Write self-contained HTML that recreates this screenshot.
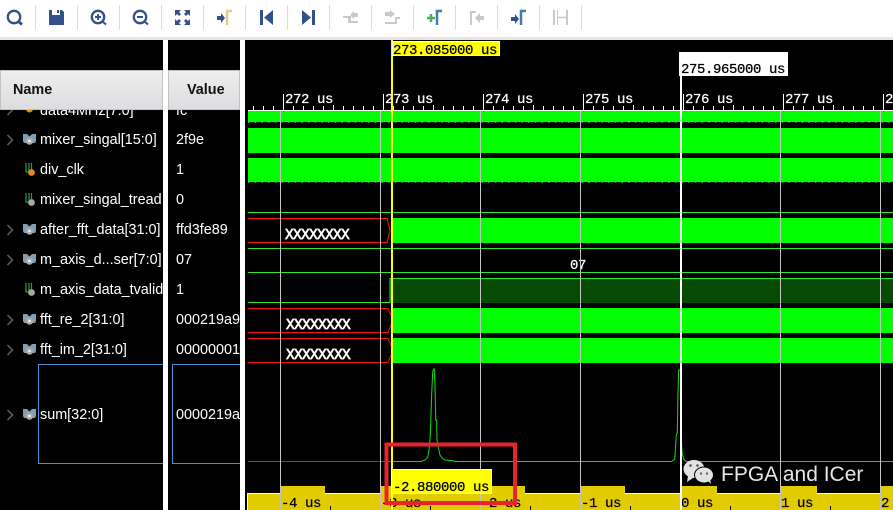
<!DOCTYPE html>
<html><head><meta charset="utf-8"><style>
html,body{margin:0;padding:0;background:#000;width:893px;height:510px;overflow:hidden}
svg{display:block}
.s{font-family:"Liberation Sans",Arial,sans-serif;font-size:14.4px;fill:#fff}
.h{font-family:"Liberation Sans",Arial,sans-serif;font-size:14.4px;font-weight:bold;fill:#111}
.m{font-family:"Liberation Mono",monospace;font-size:14px;letter-spacing:-.4px;fill:#fff;stroke:#fff;stroke-width:.25}
.k{font-family:"Liberation Mono",monospace;font-size:14px;letter-spacing:-.4px;fill:#000;stroke:#000;stroke-width:.25}
.x{font-family:"Liberation Mono",monospace;font-size:14.5px;letter-spacing:-.7px;fill:#fff;stroke:#fff;stroke-width:.7}
.c{fill:none;stroke:#606060;stroke-width:1.5}
</style></head><body>
<svg width="893" height="510" viewBox="0 0 893 510" xmlns="http://www.w3.org/2000/svg">
<defs>
<linearGradient id="hd" x1="0" y1="0" x2="0" y2="1"><stop offset="0" stop-color="#eeeeee"/><stop offset="1" stop-color="#dddde0"/></linearGradient>
<g id="bus"><path d="M0 0h4l2.500 2.500 2.500-2.500h4v7l-1 2h-11l-1-2z" fill="#7f9fb8"/><circle cx="6.500" cy="7" r="3.800" fill="#a8a8a8"/><circle cx="6.500" cy="7" r="1.400" fill="#eee"/></g>
<g id="bit"><path d="M.5 0v9h3v-9M6 0v6" fill="none" stroke="#2f9a46" stroke-width="1.200"/></g>
</defs>
<rect width="893" height="510" fill="#000"/>
<!-- toolbar -->
<rect width="893" height="37" fill="#fff"/><rect y="37" width="893" height="3" fill="#e6e6e6"/>
<g fill="#dcdcdc"><rect x="35" y="5" width="1" height="25"/><rect x="77" y="5" width="1" height="25"/><rect x="119" y="5" width="1" height="25"/><rect x="161" y="5" width="1" height="25"/><rect x="203" y="5" width="1" height="25"/><rect x="245" y="5" width="1" height="25"/><rect x="287" y="5" width="1" height="25"/><rect x="329" y="5" width="1" height="25"/><rect x="371" y="5" width="1" height="25"/><rect x="413" y="5" width="1" height="25"/><rect x="455" y="5" width="1" height="25"/><rect x="497" y="5" width="1" height="25"/><rect x="539" y="5" width="1" height="25"/><rect x="581" y="5" width="1" height="25"/></g>
<g fill="none" stroke="#34508a" stroke-width="2.300">
<circle cx="14" cy="17" r="6.200"/><path d="M18.500 21.500l3.500 3" stroke-width="2.800"/>
<circle cx="98" cy="17" r="6.200"/><path d="M102.500 21.500l3.500 3M95 17h6M98 14v6" stroke-width="2"/>
<circle cx="140" cy="17" r="6.200"/><path d="M144.500 21.500l3.500 3M137 17h6" stroke-width="2"/>
</g>
<path d="M49 10h3v5h8v-5h2l2 2v13h-15z" fill="#34508a"/><rect x="57" y="10" width="2" height="3" fill="#34508a"/>
<g fill="#34508a"><path d="M175 10h6l-2 2 2 2-2 2-2-2-2 2z"/><path d="M190 10h-6l2 2-2 2 2 2 2-2 2 2z"/><path d="M175 25h6l-2-2 2-2-2-2-2 2-2-2z"/><path d="M190 25h-6l2-2-2-2 2-2 2 2 2-2z"/>
<path d="M217 16h4v-3l4 5-4 5v-3h-4z"/>
<path d="M260 10h3v15h-3zM273 10v15l-9-7.500z"/>
<path d="M302 10v15l9-7.500zM312 10h3v15h-3z"/>
<path d="M511 17h4v-3l4 5-4 5v-3h-4z"/></g>
<path d="M227 25V11h5" fill="none" stroke="#dfcf7f" stroke-width="2.500"/>
<path d="M521 25V11h5" fill="none" stroke="#3f7fa8" stroke-width="2.500"/>
<path d="M437 25V11h5" fill="none" stroke="#3f7fa8" stroke-width="2.500"/>
<path d="M427 18h8M431 14v8" stroke="#4caf50" stroke-width="2.500"/>
<g fill="#c9c9c9"><path d="M343 18h5v5h10v-2h-7v-5h-8z"/><path d="M358 13h-4v-2l-4 4 4 4v-2h4z"/>
<path d="M385 22h10v-5h5v2h-3v5h-12z"/><path d="M385 12h5v-2l5 4-5 4v-2h-5z"/>
<path d="M470 25V11h6v2h-4v12z"/><path d="M484 16h-4v-3l-5 5 5 5v-3h4z"/>
<path d="M553 10h2v15h-2zM558 10h-1v15h1zM566 10h2v15h-2z"/></g>
<path d="M557 17.500h9" stroke="#c9c9c9" stroke-width="1.500"/>
<!-- row text -->
<g class="s">
<text x="40" y="115">data4MHz[7:0]</text><text x="176" y="115">fc</text>
<text x="40" y="144">mixer_singal[15:0]</text><text x="176" y="144">2f9e</text>
<text x="40" y="174">div_clk</text><text x="176" y="174">1</text>
<text x="40" y="204">mixer_singal_tread</text><text x="176" y="204">0</text>
<text x="40" y="234">after_fft_data[31:0]</text><text x="176" y="234">ffd3fe89</text>
<text x="40" y="264">m_axis_d...ser[7:0]</text><text x="176" y="264">07</text>
<text x="40" y="294">m_axis_data_tvalid</text><text x="176" y="294">1</text>
<text x="40" y="324">fft_re_2[31:0]</text><text x="176" y="324">000219a9</text>
<text x="40" y="354">fft_im_2[31:0]</text><text x="176" y="354">00000001</text>
<text x="40" y="419">sum[32:0]</text><text x="176" y="419">0000219a</text>
</g>
<path class="c" d="M7.500 105l5 5-5 5M7.500 135l5 5-5 5M7.500 225l5 5-5 5M7.500 255l5 5-5 5M7.500 315l5 5-5 5M7.500 345l5 5-5 5M7.500 410l5 5-5 5"/>
<use href="#bus" x="23" y="134"/><use href="#bus" x="23" y="224"/><use href="#bus" x="23" y="254"/><use href="#bus" x="23" y="314"/><use href="#bus" x="23" y="344"/><use href="#bus" x="23" y="409"/>
<circle cx="29.500" cy="109" r="3.500" fill="#e08a20"/><path d="M25 103h9v4h-9z" fill="#d0a060"/>
<use href="#bit" x="25.500" y="163"/><circle cx="31.500" cy="172.500" r="3.400" fill="#e08a20"/>
<use href="#bit" x="25.500" y="193"/><circle cx="31.500" cy="202.500" r="3.400" fill="#a8a8a8"/>
<use href="#bit" x="25.500" y="283"/><circle cx="31.500" cy="292.500" r="3.400" fill="#a8a8a8"/>
<!-- selection -->
<path d="M163 364.500H38.500v99H163M240 364.500h-67.500v99H240" fill="none" stroke="#4a90d0"/>
<!-- headers -->
<rect x=".5" y="70.500" width="162" height="39" fill="url(#hd)" stroke="#c2c2c2"/>
<rect x="168.500" y="70.500" width="71" height="39" fill="url(#hd)" stroke="#c2c2c2"/>
<text class="h" x="13" y="94">Name</text><text class="h" x="187" y="94">Value</text>
<rect x="163" y="40" width="5" height="470" fill="#fff"/><rect x="240" y="40" width="5" height="470" fill="#fff"/>
<!-- wave bands -->
<g fill="#00ff00" shape-rendering="crispEdges">
<rect x="248" y="111" width="645" height="11"/><rect x="248" y="128" width="645" height="25"/><rect x="248" y="158" width="645" height="24"/>
<rect x="391" y="218" width="502" height="25"/><rect x="391" y="308" width="502" height="25"/><rect x="391" y="338" width="502" height="25"/>
</g>
<path d="M248 122.500H893M248 182.500H893" stroke="#00c800" stroke-dasharray="1.500 5.170"/>
<rect x="390" y="278" width="503" height="25" fill="#064a06"/>
<g fill="none" stroke="#2ee82e" shape-rendering="crispEdges">
<path d="M248 212.500H893M248 248.500H893M248 272.500H893M390 278.500H893M390 278V303M248 302.500H390"/>
</g>
<g fill="none" stroke="#ff1010">
<path d="M248 218.500H387l3 12-3 12H248M248 308.500H388l3 7M391 325l-3 7.500H248M248 338.500H388l3 7M391 355l-3 7.500H248"/>
<path d="M248 461.500H391" shape-rendering="crispEdges"/>
</g>
<text class="x" x="285" y="239">XXXXXXXX</text><text class="x" x="286" y="329">XXXXXXXX</text><text class="x" x="286" y="359">XXXXXXXX</text>
<text class="m" x="570" y="269">07</text>
<!-- sum -->
<path d="M391 461.500H421L425 460 427.700 457.300 429 450 430 440 430.700 425 431.700 393 432.700 371.700 434.300 368.300 435 385 435.700 420 436.700 420 437 440 438.300 447.300 440 455 442.300 458.300 445 460 453.300 460.700 455 461.500H671.300L674.700 459.300 676.300 435 677.300 433.300 678 391.700 678.700 370 681.300 370 681.300 440 682 451.700 683.700 459.300 686.300 461.500H893" fill="none" stroke="#10e010" stroke-width="1"/>
<!-- grid -->
<g stroke="#c4c4c4" stroke-width="1" shape-rendering="crispEdges"><path d="M280.500 111V510M380.500 111V510M480.500 111V510M580.500 111V510M780.500 111V510M880.500 111V510"/></g>
<!-- ruler -->
<rect x="248" y="110" width="645" height="1" fill="#fff"/>
<path d="M283.500 94V110M383.500 94V110M483.500 94V110M583.500 94V110M683.500 94V110M783.500 94V110M883.500 94V110M253.500 106V110M263.500 106V110M273.500 106V110M293.500 106V110M303.500 106V110M313.500 106V110M323.500 106V110M333.500 105V110M343.500 106V110M353.500 106V110M363.500 106V110M373.500 106V110M393.500 106V110M403.500 106V110M413.500 106V110M423.500 106V110M433.500 105V110M443.500 106V110M453.500 106V110M463.500 106V110M473.500 106V110M493.500 106V110M503.500 106V110M513.500 106V110M523.500 106V110M533.500 105V110M543.500 106V110M553.500 106V110M563.500 106V110M573.500 106V110M593.500 106V110M603.500 106V110M613.500 106V110M623.500 106V110M633.500 105V110M643.500 106V110M653.500 106V110M663.500 106V110M673.500 106V110M693.500 106V110M703.500 106V110M713.500 106V110M723.500 106V110M733.500 105V110M743.500 106V110M753.500 106V110M763.500 106V110M773.500 106V110M793.500 106V110M803.500 106V110M813.500 106V110M823.500 106V110M833.500 105V110M843.500 106V110M853.500 106V110M863.500 106V110M873.500 106V110" stroke="#fff" fill="none" shape-rendering="crispEdges"/>
<g class="m"><text x="285" y="103">272 us</text><text x="385" y="103">273 us</text><text x="485" y="103">274 us</text><text x="585" y="103">275 us</text><text x="685" y="103">276 us</text><text x="785" y="103">277 us</text><text x="885" y="103">2</text></g>
<!-- bottom ruler -->
<path d="M247 510V493H280V486H325V493H380V486H425V493H480V486H525V493H580V486H625V493H680V486H717V493H780V486H817V493H880V486H893V510Z" fill="#e0cc00" shape-rendering="crispEdges"/>
<path d="M247.500 510V493.500H280M325 493.500H380M425 493.500H480M525 493.500H580M625 493.500H680M717 493.500H780M817 493.500H880" stroke="#fff" fill="none" shape-rendering="crispEdges"/>
<path d="M330.500 506V510M430.500 506V510M530.500 506V510M630.500 506V510M730.500 506V510M830.500 506V510" stroke="#000" shape-rendering="crispEdges"/>
<g class="k"><text x="281" y="507">-4 us</text><text x="381" y="507">-3 us</text><text x="481" y="507">-2 us</text><text x="581" y="507">-1 us</text><text x="681" y="507">0 us</text><text x="781" y="507">1 us</text><text x="881" y="507">2</text></g>
<path d="M280.500 486V510M380.500 486V510M480.500 486V510M580.500 486V510M780.500 486V510M880.500 486V510" stroke="#c4c4c4" shape-rendering="crispEdges"/>
<!-- markers -->
<rect x="680" y="76" width="2" height="434" fill="#fff"/>
<rect x="679" y="52" width="109" height="24" fill="#fff"/>
<text class="k" x="681" y="73">275.965000 us</text>
<rect x="391" y="40" width="2" height="470" fill="#ffff00"/>
<rect x="392.500" y="41.500" width="107" height="14" fill="#ffff00" stroke="#fff"/>
<text class="k" x="393" y="54">273.085000 us</text>
<rect x="391.500" y="469.500" width="100" height="24" fill="#ffff00" stroke="#fff"/>
<text class="k" x="393" y="491">-2.880000 us</text>
<!-- red box -->
<rect x="386.500" y="444.500" width="128.500" height="58.500" fill="none" stroke="#e8232a" stroke-width="4"/>
<!-- watermark -->
<g fill="#e2e2e2"><ellipse cx="694" cy="469" rx="10.500" ry="9"/><path d="M688 476l-1 6 6-4z"/></g>
<g stroke="#000" fill="#e2e2e2"><ellipse cx="704" cy="475" rx="9.500" ry="8"/></g><path d="M708 481l3 3-1-5z" fill="#e2e2e2"/>
<g fill="#555"><circle cx="690.500" cy="465.500" r="1.300"/><circle cx="697.500" cy="465.500" r="1.300"/><circle cx="701" cy="473.500" r="1.100"/><circle cx="707" cy="473.500" r="1.100"/></g>
<text x="721" y="481" font-family="'Liberation Sans',sans-serif" font-size="21" fill="#e6e6e6">FPGA and ICer</text>
</svg>
</body></html>
